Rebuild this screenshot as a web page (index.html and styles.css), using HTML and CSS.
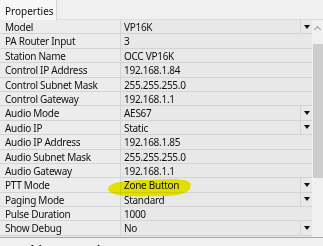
FILE: index.html
```html
<!DOCTYPE html>
<html>
<head>
<meta charset="utf-8">
<link rel="stylesheet" href="styles.css">
</head>
<body>
<div class="panel">
  <div class="tabbar"><div class="tab">Properties</div></div>
  <div class="body">
    <div class="grid">
      <div class="row"><div class="k">Model</div><div class="v">VP16K</div><div class="dd"><i></i></div></div>
      <div class="row"><div class="k">PA Router Input</div><div class="v">3</div></div>
      <div class="row"><div class="k">Station Name</div><div class="v">OCC VP16K</div></div>
      <div class="row"><div class="k">Control IP Address</div><div class="v">192.168.1.84</div></div>
      <div class="row"><div class="k">Control Subnet Mask</div><div class="v">255.255.255.0</div></div>
      <div class="row"><div class="k">Control Gateway</div><div class="v">192.168.1.1</div></div>
      <div class="row"><div class="k">Audio Mode</div><div class="v">AES67</div><div class="dd"><i></i></div></div>
      <div class="row"><div class="k">Audio IP</div><div class="v">Static</div><div class="dd"><i></i></div></div>
      <div class="row"><div class="k">Audio IP Address</div><div class="v">192.168.1.85</div></div>
      <div class="row"><div class="k">Audio Subnet Mask</div><div class="v">255.255.255.0</div></div>
      <div class="row"><div class="k">Audio Gateway</div><div class="v">192.168.1.1</div></div>
      <div class="row"><div class="k">PTT Mode</div><div class="v">Zone Button</div><div class="dd"><i></i></div></div>
      <div class="row"><div class="k">Paging Mode</div><div class="v">Standard</div><div class="dd"><i></i></div></div>
      <div class="row"><div class="k">Pulse Duration</div><div class="v">1000</div></div>
      <div class="row"><div class="k">Show Debug</div><div class="v">No</div><div class="dd"><i></i></div></div>
    </div>
    <div class="scroll">
      <div class="up"></div>
      <div class="thumb"></div>
    </div>
  </div>
  <div class="section">Graphic Properties</div>
  <svg class="marker" width="323" height="246" viewBox="0 0 323 246">
    <path d="M108,189 C109,182 125,180 148,180 C170,179 187,178 190,183 C193,190 186,196 160,196 C135,197 109,197 108,189 Z" fill="#f6f400"/>
  </svg>
</div>
</body>
</html>
```

FILE: styles.css
```css
* { box-sizing: border-box; }
html, body { margin: 0; padding: 0; }
body {
  width: 323px;
  height: 246px;
  overflow: hidden;
  background: #f0f0f0;
  font-family: "Noto Sans", "Open Sans", sans-serif;
  font-size: 10px;
  letter-spacing: -0.28px;
  color: #111;
}
.panel { position: relative; width: 323px; height: 246px; }
.tabbar {
  height: 20px;
  background: #f0f0f0;
  border-bottom: 1px solid #dcdcdc;
  display: flex;
}
.tab {
  width: 57px;
  height: 20px;
  background: #f7f7f7;
  border-right: 1px solid #d6d6d6;
  padding: 4px 0 0 5px;
  line-height: 14px;
  font-size: 10px;
  letter-spacing: 0;
}
.body { display: flex; height: 217px; }
.grid { flex: 1; display: flex; flex-direction: column; background: #e8e8e8; }
.row {
  height: 14.4px;
  display: flex;
  border-bottom: 1px solid #d4d4d4;
  line-height: 14px;
}
.k {
  width: 121px;
  flex: none;
  padding: 0 0 0 5px;
  border-right: 1px solid #d4d4d4;
  background: #ececec;
  white-space: nowrap;
}
.v { flex: 1; padding: 0 0 0 3px; white-space: nowrap; }
.dd {
  width: 12px;
  flex: none;
  border-left: 1px solid #d4d4d4;
  display: flex;
  align-items: center;
  justify-content: center;
}
.dd i {
  display: block;
  width: 0; height: 0;
  border-left: 3px solid transparent;
  border-right: 3px solid transparent;
  border-top: 4px solid #111;
}
.scroll { width: 11px; flex: none; background: #f0f0f0; position: relative; }
.up {
  width: 5px; height: 5px;
  border-left: 1px solid #9a9a9a;
  border-top: 1px solid #9a9a9a;
  transform: rotate(45deg);
  margin: 7px 0 0 3px;
}
.thumb {
  margin-top: 12px;
  height: 134px;
  margin-left: 1px;
  width: 10px;
  background: #cdcdcd;
}
.section {
  border-top: 1px solid #a8a8a8;
  height: 9px;
  overflow: hidden;
  font-weight: bold;
  font-size: 12px;
  letter-spacing: 0;
  line-height: 14px;
  padding: 6px 0 0 2px;
  color: #000;
}
.marker {
  position: absolute;
  left: 0; top: 0;
  mix-blend-mode: multiply;
  pointer-events: none;
}
```
